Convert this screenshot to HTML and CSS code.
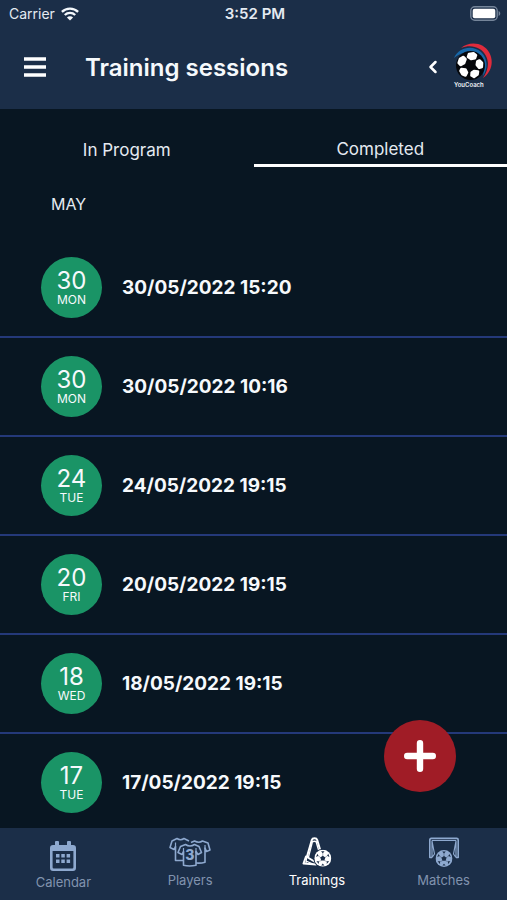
FILE: index.html
```html
<!DOCTYPE html>
<html lang="en">
<head>
<meta charset="utf-8">
<meta name="viewport" content="width=device-width, initial-scale=1">
<title>Training sessions</title>
<link rel="stylesheet" href="styles.css">
</head>
<body>
<svg class="defs" width="0" height="0" aria-hidden="true">
  <symbol id="ball" viewBox="0 0 24 24">
    <circle class="ball-base" cx="12" cy="12" r="12"/>
    <g class="ball-patch">
      <path d="M12 8.300l3.600 2.600-1.400 4.200H9.800l-1.400-4.200z"/>
      <path d="M9.500 2h5L12 4.800z"/>
      <path d="M19.600 5.600l2 4.400-3.400-1.500z"/>
      <path d="M21 16l-3.500 4 .2-4z"/>
      <path d="M4.400 5.600L2.400 10l3.400-1.500z"/>
      <path d="M3 16l3.500 4-.2-4z"/>
      <path d="M9.800 22L12 19.300l2.200 2.700z"/>
    </g>
    <path class="ball-seam" d="M12 4v5M15 11l4-3M14 15l4.500 2M10 15l-4.500 2M9 11L5 8"/>
  </symbol>
</svg>

<header class="header">
  <div class="status">
    <div class="status-left">
      <span>Carrier</span>
      <svg width="18" height="14" viewBox="0 0 18 14" aria-hidden="true">
        <g fill="none" stroke="#f4f8fc" stroke-width="2.300">
          <path d="M.9 4.900a11.500 11.500 0 0 1 16.200 0"/>
          <path d="M3.800 8a7.400 7.400 0 0 1 10.400 0"/>
        </g>
        <path fill="#f4f8fc" d="M9 13.600L5.900 10.500a4.400 4.400 0 0 1 6.200 0z"/>
      </svg>
    </div>
    <time class="clock">3:52 PM</time>
    <svg class="battery" width="31" height="15" viewBox="0 0 31 15" aria-hidden="true">
      <rect x=".8" y=".8" width="26.400" height="13.400" rx="4" fill="none" stroke="#75859a" stroke-width="1.400"/>
      <rect x="2.700" y="2.700" width="22.600" height="9.600" rx="2" fill="#fff"/>
      <path d="M28.600 5v5c2.200-.8 2.200-4.200 0-5z" fill="#75859a"/>
    </svg>
  </div>
  <div class="toolbar">
    <button class="icon-button" type="button" aria-label="Menu">
      <svg width="22" height="20" viewBox="0 0 22 20"><path d="M0 2h22M0 10h22M0 18h22" stroke="#fff" stroke-width="3.400"/></svg>
    </button>
    <h1 class="title">Training sessions</h1>
    <button class="icon-button" type="button" aria-label="Back">
      <svg width="10" height="14" viewBox="0 0 10 14"><path d="M7.500 2L2.500 7l5 5" fill="none" stroke="#fff" stroke-width="2.500" stroke-linecap="round" stroke-linejoin="round"/></svg>
    </button>
    <svg class="logo" width="40" height="48" viewBox="0 0 40 48" role="img" aria-label="YouCoach">
      <path d="M8 5C16-2 31-1 36.500 10c4.500 9 2 19-6.500 25 5-7 6.500-15 3-22C28.500 4 18 1 8 5z" fill="#e02b3c"/>
      <path d="M1 15C6 4 20 1.500 28.500 9.500 35 16 35 26 30 33c1.500-7 1-13-3.500-18C20 7.500 9 7.500 1 15z" fill="#1767a8"/>
      <circle cx="17.500" cy="22.500" r="14.500" fill="#05070b"/>
      <g fill="#fff" stroke="#fff" stroke-width="2.600" stroke-linejoin="round">
        <path d="M16 11l4.500-.8 2.500 2-1 3-4 .8-3-2z"/>
        <path d="M26.500 17.500l2.500 2.500-.2 4-2.500.8-2.500-3 .5-3.300z"/>
        <path d="M21 28l4 .5-.5 3-3.500 2.500-2.500-1.500.2-3z"/>
        <path d="M8.500 26l4 .5 1.500 3-1.500 3-3-1.200-2-3.500z"/>
        <path d="M7 16l3.500-2 2 2.200-1.500 4L7.500 22l-1.800-2z"/>
      </g>
      <text class="logo-text" x="1" y="44">YouCoach</text>
    </svg>
  </div>
</header>

<main class="main">
  <div class="tabs" role="tablist">
    <button class="tab" type="button" role="tab" aria-selected="false">In Program</button>
    <button class="tab tab-active" type="button" role="tab" aria-selected="true">Completed</button>
  </div>
  <h2 class="month">MAY</h2>
  <ul class="sessions">
    <li class="session"><div class="day"><span class="day-number">30</span><span class="day-name">MON</span></div><time>30/05/2022 15:20</time></li>
    <li class="session"><div class="day"><span class="day-number">30</span><span class="day-name">MON</span></div><time>30/05/2022 10:16</time></li>
    <li class="session"><div class="day"><span class="day-number">24</span><span class="day-name">TUE</span></div><time>24/05/2022 19:15</time></li>
    <li class="session"><div class="day"><span class="day-number">20</span><span class="day-name">FRI</span></div><time>20/05/2022 19:15</time></li>
    <li class="session"><div class="day"><span class="day-number">18</span><span class="day-name">WED</span></div><time>18/05/2022 19:15</time></li>
    <li class="session"><div class="day"><span class="day-number">17</span><span class="day-name">TUE</span></div><time>17/05/2022 19:15</time></li>
  </ul>
</main>

<footer class="footer">
  <button class="add" type="button" aria-label="Add session">
    <svg width="32" height="32" viewBox="0 0 32 32"><path d="M16 3.200v25.600M3.200 16h25.600" stroke="#fff" stroke-width="6.400" stroke-linecap="round"/></svg>
  </button>
  <nav class="nav">
    <a class="nav-item nav-calendar" href="#calendar">
      <svg width="26" height="30" viewBox="0 0 26 30" fill="currentColor" aria-hidden="true">
        <path fill-rule="evenodd" d="M5 1q0-1 1-1h2q1 0 1 1v3h8V1q0-1 1-1h2q1 0 1 1v3h2q3 0 3 3v20q0 3-3 3H3q-3 0-3-3V7q0-3 3-3h2zM2.600 10v16.200q0 1.200 1.200 1.200h18.400q1.200 0 1.200-1.200V10z"/>
        <path d="M6 13h3.500v3.500H6zM11.300 13h3.500v3.500h-3.500zM16.600 13h3.500v3.500h-3.500zM6 18.500h3.500V22H6zM11.300 18.500h3.500V22h-3.500zM16.600 18.500h3.500V22h-3.500z"/>
      </svg>
      <span>Calendar</span>
    </a>
    <a class="nav-item" href="#players">
      <svg width="42" height="30" viewBox="0 0 42 30" fill="none" stroke="currentColor" stroke-width="1.600" stroke-linejoin="round" aria-hidden="true">
        <path d="M14 23.500H6.500V9.500L5 12.500 1 10.500 3 4l5-2.500Q11.500 4 15 1.500l5 2.500"/>
        <path d="M27 26q5 .5 9-.8V11l1.500 3.500 3.500-1.500-2-7-5.500-2Q30 6.500 25.500 4L22 5.500"/>
        <path fill="#1b2e48" d="M14.500 28.200V14.500l-1.500 3-4-2L11.500 9.500 16.500 7.500Q21 10.500 25.500 7.500l4.500 2 2.500 6-3.500 2-2-3v13.700q-6.500 1.600-12.500 0z"/>
        <path d="M6.500 5.500v5M36 8v4M14.500 11v5M27 11v5" stroke-width="1.200"/>
        <text class="shirt-number" x="20.800" y="23">3</text>
      </svg>
      <span>Players</span>
    </a>
    <a class="nav-item nav-current" href="#trainings" aria-current="page">
      <svg width="30" height="30" viewBox="0 0 30 30" fill="none" stroke="currentColor" stroke-linecap="round" stroke-linejoin="round" aria-hidden="true">
        <path stroke-width="2" d="M5 19.500L9.800 3Q10.300 1.300 12.500 1.300T15.200 3L18.500 14M4 19.500L1.500 26.500 14 27.500M5 20l9 5.500"/>
        <path stroke-width="1.300" d="M10.500 4.500L6.500 20M14 4.500l3 10M4.500 21L4 26M10 5q2.500-1.500 5 0M4 24l7 3"/>
        <circle cx="20.800" cy="21.300" r="9.500" fill="#1b2e48" stroke="none"/>
        <use href="#ball" x="12.300" y="12.800" width="17" height="17" stroke="none"/>
      </svg>
      <span>Trainings</span>
    </a>
    <a class="nav-item" href="#matches">
      <svg width="32" height="30" viewBox="0 0 32 30" fill="none" stroke="currentColor" stroke-linejoin="round" aria-hidden="true">
        <path stroke-width="1.600" d="M4 20.500H1.800V3Q1.800 1.400 3.300 1.400h25.400q1.500 0 1.500 1.600v17.500H28"/>
        <path stroke-width="1.200" d="M4 3.500h24M4 3.500v17M4 4l2.500 13L4 20.500M28 3.500v17M28 4l-2.500 13 2.500 3.500"/>
        <circle cx="16" cy="21.500" r="9.200" fill="#1b2e48" stroke="none"/>
        <use href="#ball" x="7.500" y="13" width="17" height="17" stroke="none"/>
      </svg>
      <span>Matches</span>
    </a>
  </nav>
</footer>
</body>
</html>
```
FILE: styles.css
```css
* {
  box-sizing: border-box;
}

body {
  margin: 0;
  height: 100vh;
  display: flex;
  flex-direction: column;
  background: #081622;
  color: #e4eaf1;
  font-family: Inter, "Liberation Sans", sans-serif;
}

button {
  padding: 0;
  border: 0;
  background: none;
  color: inherit;
  font: inherit;
  cursor: pointer;
}

svg {
  display: block;
}

.defs {
  position: absolute;
}

.ball-base {
  fill: currentColor;
}

.ball-patch {
  fill: #1b2e48;
}

.ball-seam {
  stroke: #1b2e48;
  stroke-width: 1;
  stroke-opacity: 0.5;
}

.header {
  background: #1b2e48;
}

.status {
  display: grid;
  grid-template-columns: 1fr auto 1fr;
  align-items: center;
  height: 27px;
  padding: 0 6px 0 9px;
  font-size: 14px;
}

.status-left {
  display: flex;
  align-items: center;
  gap: 6px;
}

.clock {
  font-size: 15px;
  font-weight: 600;
}

.battery {
  justify-self: end;
}

.toolbar {
  display: flex;
  align-items: center;
  height: 82px;
  padding: 0 14px 2px 24px;
}

.title {
  flex: 1;
  margin: 0 0 0 39px;
  color: #f6f9fc;
  font-size: 24px;
  font-weight: 600;
}

.logo {
  margin-left: 15px;
}

.logo-text {
  fill: #eef2f7;
  font-size: 6px;
  font-weight: 600;
}

.main {
  flex: 1;
  min-height: 0;
  overflow-y: auto;
  scrollbar-width: none;
}

.tabs {
  display: grid;
  grid-template-columns: 1fr 1fr;
  margin-top: 22px;
}

.tab {
  height: 36px;
  padding-top: 2px;
  font-size: 17px;
}

.tab-active {
  border-bottom: 3px solid #fff;
}

.month {
  margin: 0;
  padding: 2px 0 0 51px;
  font-size: 16px;
  font-weight: 400;
  line-height: 70px;
}

.sessions {
  margin: 0;
  padding: 0;
  list-style: none;
}

.session {
  display: flex;
  align-items: center;
  gap: 20px;
  height: 99px;
  padding-left: 41px;
  border-bottom: 2px solid #24397a;
  color: #f6f9fc;
  font-size: 19px;
  font-weight: 700;
}

.day {
  display: flex;
  flex-direction: column;
  align-items: center;
  justify-content: center;
  width: 61px;
  height: 61px;
  border-radius: 50%;
  background: #1a9466;
  font-weight: 400;
}

.day-number {
  font-size: 24px;
  line-height: 24px;
}

.day-name {
  font-size: 12px;
  line-height: 14px;
}

.footer {
  position: relative;
  background: #1b2e48;
}

.add {
  position: absolute;
  right: 51px;
  bottom: 108px;
  display: grid;
  place-items: center;
  width: 72px;
  height: 72px;
  border-radius: 50%;
  background: #a01c26;
}

.nav {
  display: grid;
  grid-template-columns: repeat(4, 1fr);
  height: 72px;
}

.nav-item {
  display: flex;
  flex-direction: column;
  align-items: center;
  gap: 4px;
  padding-top: 9px;
  color: #8ea9cf;
  font-size: 13px;
  line-height: 18px;
  text-decoration: none;
}

.nav-item span {
  color: #8193ae;
}

.nav-calendar {
  padding-top: 13px;
  gap: 2px;
}

.nav-current,
.nav-current span {
  color: #fff;
}

.shirt-number {
  fill: currentColor;
  stroke: none;
  font-size: 14px;
  font-weight: 800;
  text-anchor: middle;
}
```
